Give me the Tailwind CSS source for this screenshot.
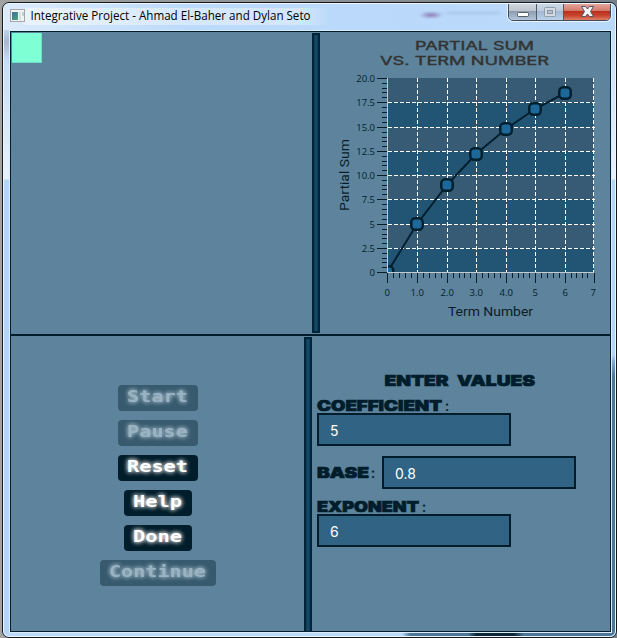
<!DOCTYPE html>
<html lang="en">
<head>
<meta charset="utf-8">
<title>Integrative Project</title>
<script src="https://cdn.jsdelivr.net/npm/@tailwindcss/browser@4"></script>
</head>
<body class="w-[617px] h-[638px] overflow-hidden bg-gradient-to-r from-[#a2a2a0] to-[#77818a] pt-[2px] pl-[2px] font-['Open_Sans',sans-serif]">
<!-- window frame -->
<div class="w-[615px] h-[636px] rounded-[7px] border border-[#15191d] bg-[#b9dafb] overflow-hidden">
<div class="w-[613px] h-[634px] rounded-[6px] border border-[#eef7ff] overflow-hidden flex flex-col">
  <header class="h-[26px] shrink-0 flex items-start justify-between bg-gradient-to-r from-[#dcebfb] via-[#bcdafa] via-30% to-[#b9d9fb]">
    <div class="flex items-start pl-[6px] pt-[3px]">
      <svg class="w-[300px] h-[20px] overflow-visible" viewBox="10 7 300 20">
        <defs>
          <linearGradient id="ico" x1="0" y1="0" x2="1" y2="1"><stop offset="0" stop-color="#3c6c9e"/><stop offset="1" stop-color="#4ca77a"/></linearGradient>
          <linearGradient id="glow" x1="0" y1="0" x2="1" y2="0"><stop offset="0" stop-color="#fff" stop-opacity=".45"/><stop offset=".9" stop-color="#fff" stop-opacity=".35"/><stop offset="1" stop-color="#fff" stop-opacity="0"/></linearGradient>
          <filter id="soft" x="-50%" y="-150%" width="200%" height="400%"><feGaussianBlur stdDeviation="3 1.5"/></filter>
        </defs>
        <rect x="20" y="8" width="310" height="17" rx="8" fill="url(#glow)"/>
        <rect x="424" y="13" width="14" height="4" fill="#7a5a9a" opacity=".7" filter="url(#soft)"/>
        <rect x="445" y="12" width="55" height="2" fill="#7d9cc4" opacity=".4" filter="url(#soft)"/>
        <rect x="10.500" y="9.500" width="14" height="12" fill="#f1f2f2" stroke="#a4a7aa"/>
        <rect x="12" y="12" width="6" height="8" fill="url(#ico)"/>
        <rect x="19" y="12" width="2" height="8" fill="#dcdedf"/>
        <rect x="22" y="12" width="2" height="4" fill="#b9d6cb"/>
        <text x="30.500" y="20" font-size="12" fill="#000" textLength="280" lengthAdjust="spacingAndGlyphs">Integrative Project - Ahmad El-Baher and Dylan Seto</text>
      </svg>
    </div>
    <!-- caption buttons -->
    <div class="flex mr-[4px] -mt-[2px] h-[19px] w-[103px] rounded-b-[5px] border border-[#3f4b59] overflow-hidden shadow-[0_0_0_1px_#e8f3ff]">
      <div class="w-[28px] border-r border-[#4f5b69] bg-[linear-gradient(#d3d8df_0%,#bcc5d0_45%,#8d9bac_48%,#b3c6dc_100%)] flex justify-center">
        <svg width="27" height="17" viewBox="0 0 27 17"><rect x="8.500" y="9.500" width="11" height="4" rx="1" fill="#fff" stroke="#555d68"/></svg>
      </div>
      <div class="w-[27px] border-r border-[#4f5b69] bg-[linear-gradient(#ced9e6_0%,#bccbdd_45%,#a2b6cf_48%,#bad2ec_100%)] flex justify-center">
        <svg width="26" height="17" viewBox="0 0 26 17"><rect x="7.500" y="4.500" width="11" height="9" rx="1" fill="#d4dbe3" stroke="#909dab"/><rect x="10.500" y="7.500" width="5" height="3" fill="#b5c2d1" stroke="#8795a5"/></svg>
      </div>
      <div class="flex-1 bg-[linear-gradient(#e5aba0_0%,#d27b6c_45%,#b92e1b_48%,#c8452e_75%,#df8068_100%)] flex justify-center">
        <svg width="46" height="17" viewBox="0 0 46 17"><path d="M17.500 3.500h4l2 2.500 2-2.500h4l-3 5 3 5h-4l-2-2.500-2 2.500h-4l3-5z" fill="#f5f5f5" stroke="#535666"/></svg>
      </div>
    </div>
  </header>

  <div class="flex h-[603px] shrink-0">
    <div class="w-[5px] shrink-0 bg-[linear-gradient(#bfd4eb_0px,#a7b9d0_12px,#c4ddf7_30px,#e8f2fd_149px,#b3d5f9_150px)]"></div>
    <main class="w-[603px] shrink-0 border border-[#dcecf8] bg-[#5d849c]">
      <section class="h-[305px] w-full border-t border-x border-b-2 border-[#001d2b] flex">
        <div class="w-[301px] pt-px pl-px shrink-0">
          <div class="size-[30px] bg-[#7fffd4] border-r border-b border-[#71dfc6]"></div>
        </div>
        <div class="w-[8px] mt-px mb-px shrink-0 border-2 border-[#002538] bg-[linear-gradient(90deg,#0c3a58,#164c70_50%,#0c3a58)]"></div>
        <svg class="w-[290px] h-[302px] shrink-0" viewBox="320 32 290 302" id="chart">
          <g font-family="Inter, sans-serif" font-size="12.300" fill="#333" stroke="#333" stroke-width=".4">
            <text x="415" y="49.500" textLength="119" lengthAdjust="spacingAndGlyphs">PARTIAL SUM</text>
            <text x="380" y="65" textLength="169" lengthAdjust="spacingAndGlyphs">VS. TERM NUMBER</text>
          </g>
          <g id="bands"></g>
          <g id="grid" stroke="#fff" stroke-width="1" stroke-dasharray="4 2" shape-rendering="crispEdges"></g>
          <path d="M387.500 78V272.500H594" fill="none" stroke="#c3cbd0"/>
          <g id="ticks" stroke="#001d2b" shape-rendering="crispEdges"></g>
          <g id="labels" font-family="Open Sans, sans-serif" font-size="9.500" fill="#031f2e"></g>
          <text x="448" y="316" font-family="Roboto, sans-serif" font-size="13" fill="#0b1c28" textLength="85" lengthAdjust="spacingAndGlyphs">Term Number</text>
          <text transform="translate(349 211) rotate(-90)" font-family="Roboto, sans-serif" font-size="13" fill="#0b1c28" textLength="72" lengthAdjust="spacingAndGlyphs">Partial Sum</text>
          <clipPath id="plot"><rect x="388" y="70" width="214" height="202"/></clipPath>
          <g clip-path="url(#plot)">
            <path d="M387.500 272 417 224 447 185 476 154 506 129 535 109 565 93" fill="none" stroke="#00202f" stroke-width="2"/>
            <g id="points" fill="#1d6799" stroke="#00202f" stroke-width="2.500"></g>
          </g>
        </svg>
      </section>

      <section class="h-[296px] w-full border-x border-b border-[#001d2b] flex">
        <div class="w-[293px] shrink-0 pt-[49px] flex flex-col items-center gap-[9px]" id="buttons">
          <div class="w-[80px] h-[26px] rounded-[4px] bg-[#001d2b] opacity-40"><svg class="w-full h-full overflow-visible" viewBox="0 0 80 26"><text x="9" y="17" textLength="61" lengthAdjust="spacingAndGlyphs" class="font-['DejaVu_Sans_Mono',monospace] font-bold text-[15px] fill-[#f4fbff] [text-shadow:0_0_5px_#fff,0_0_4px_#fff]">Start</text></svg></div>
          <div class="w-[80px] h-[26px] rounded-[4px] bg-[#001d2b] opacity-40"><svg class="w-full h-full overflow-visible" viewBox="0 0 80 26"><text x="9" y="17" textLength="61" lengthAdjust="spacingAndGlyphs" class="font-['DejaVu_Sans_Mono',monospace] font-bold text-[15px] fill-[#f4fbff] [text-shadow:0_0_5px_#fff,0_0_4px_#fff]">Pause</text></svg></div>
          <div class="w-[80px] h-[26px] rounded-[4px] bg-[#001d2b]"><svg class="w-full h-full overflow-visible" viewBox="0 0 80 26"><text x="9" y="17" textLength="61" lengthAdjust="spacingAndGlyphs" class="font-['DejaVu_Sans_Mono',monospace] font-bold text-[15px] fill-white [text-shadow:0_0_5px_#e5e5e5,0_0_4px_#e5e5e5]">Reset</text></svg></div>
          <div class="w-[68px] h-[26px] rounded-[4px] bg-[#001d2b]"><svg class="w-full h-full overflow-visible" viewBox="0 0 68 26"><text x="9" y="17" textLength="49" lengthAdjust="spacingAndGlyphs" class="font-['DejaVu_Sans_Mono',monospace] font-bold text-[15px] fill-white [text-shadow:0_0_5px_#e5e5e5,0_0_4px_#e5e5e5]">Help</text></svg></div>
          <div class="w-[68px] h-[26px] rounded-[4px] bg-[#001d2b]"><svg class="w-full h-full overflow-visible" viewBox="0 0 68 26"><text x="9" y="17" textLength="49" lengthAdjust="spacingAndGlyphs" class="font-['DejaVu_Sans_Mono',monospace] font-bold text-[15px] fill-white [text-shadow:0_0_5px_#e5e5e5,0_0_4px_#e5e5e5]">Done</text></svg></div>
          <div class="w-[116px] h-[26px] rounded-[4px] bg-[#001d2b] opacity-40"><svg class="w-full h-full overflow-visible" viewBox="0 0 116 26"><text x="9" y="17" textLength="97" lengthAdjust="spacingAndGlyphs" class="font-['DejaVu_Sans_Mono',monospace] font-bold text-[15px] fill-[#f4fbff] [text-shadow:0_0_5px_#fff,0_0_4px_#fff]">Continue</text></svg></div>
        </div>
        <div class="w-[8px] mt-px shrink-0 border-2 border-b-0 border-[#002538] bg-[linear-gradient(90deg,#0c3a58,#164c70_50%,#0c3a58)]"></div>
        <div class="flex-1 pl-[5px] pt-[36px] flex flex-col items-start font-['Inter',sans-serif] text-[14px]">
          <svg class="w-[290px] h-[41px] overflow-visible" viewBox="317 372 290 41">
            <g font-weight="900" font-size="14.500" fill="#001d2b" stroke="#001d2b" stroke-width=".7">
              <text x="384.500" y="386" textLength="64" lengthAdjust="spacingAndGlyphs">ENTER</text>
              <text x="457" y="386" textLength="78" lengthAdjust="spacingAndGlyphs">VALUES</text>
              <text x="317" y="411" textLength="125" lengthAdjust="spacingAndGlyphs">COEFFICIENT</text>
            </g>
            <text x="445" y="411" font-size="14" fill="#001d2b" stroke="#001d2b" stroke-width=".4">:</text>
          </svg>
          <div class="w-[194px] h-[33px] border-2 border-[#001d2b] bg-[#316484] text-white flex items-center pl-[11px] pt-px">5</div>
          <div class="mt-[10px] flex">
            <svg class="w-[65px] h-[33px]" viewBox="317 456 65 33">
              <text x="317" y="478" font-weight="900" font-size="14.500" fill="#001d2b" stroke="#001d2b" stroke-width=".7" textLength="52" lengthAdjust="spacingAndGlyphs">BASE</text>
              <text x="371" y="478" font-size="14" fill="#001d2b" stroke="#001d2b" stroke-width=".4">:</text>
            </svg>
            <div class="w-[194px] h-[33px] border-2 border-[#001d2b] bg-[#316484] text-white flex items-center pl-[11px] pt-px">0.8</div>
          </div>
          <svg class="w-[200px] h-[25px]" viewBox="317 489 200 25">
            <text x="317" y="512" font-weight="900" font-size="14.500" fill="#001d2b" stroke="#001d2b" stroke-width=".7" textLength="102" lengthAdjust="spacingAndGlyphs">EXPONENT</text>
            <text x="422" y="512" font-size="14" fill="#001d2b" stroke="#001d2b" stroke-width=".4">:</text>
          </svg>
          <div class="w-[194px] h-[33px] border-2 border-[#001d2b] bg-[#316484] text-white flex items-center pl-[11px] pt-px">6</div>
        </div>
      </section>
    </main>
    <div class="flex-1 bg-[linear-gradient(#c4ddf7_0px,#e8f2fd_149px,#b3d5f9_150px,#b3d5f9_325px,#7ba6d8_332px,#4d7799_346px,#4d7799_100%)]"></div>
  </div>
  <div class="flex-1 bg-[linear-gradient(90deg,#b9dafb_0px,#b9dafb_398px,#4d7799_406px,#4d7799_464px,#0c2836_472px,#0c2836_510px,#4d7799_520px)]"></div>
</div>
</div>
<script>
const NS = 'http://www.w3.org/2000/svg';
function add(id, tag, attrs, text) {
  const e = document.createElementNS(NS, tag);
  for (const k in attrs) e.setAttribute(k, attrs[k]);
  if (text !== undefined) e.textContent = text;
  document.getElementById(id).appendChild(e);
}
const ys = [78, 102, 127, 151, 175, 199, 224, 248, 272];
const xs = [387, 417, 447, 476, 506, 535, 565, 593];
const yl = ['20.0', '17.5', '15.0', '12.5', '10.0', '7.5', '5', '2.5', '0'];
const xl = ['0', '1.0', '2.0', '3.0', '4.0', '5', '6', '7'];
ys.forEach((y, i) => {
  if (i < 8) add('bands', 'rect', { x: 388, y, width: 206, height: ys[i + 1] - y, fill: i % 2 ? '#225474' : '#375b75' });
  if (i > 0 && i < 8) add('grid', 'line', { x1: 388, x2: 595, y1: y + .5, y2: y + .5 });
  add('ticks', 'line', { x1: 377, x2: 387, y1: y + .5, y2: y + .5 });
  if (i < 8) for (let k = 1; k < 5; k++) {
    const v = Math.round(y + (ys[i + 1] - y) * k / 5) + .5;
    add('ticks', 'line', { x1: 382, x2: 387, y1: v, y2: v });
  }
  add('labels', 'text', { x: 375, y: y + 4, 'text-anchor': 'end' }, yl[i]);
});
xs.forEach((x, i) => {
  if (i > 0) add('grid', 'line', { x1: x + .5, x2: x + .5, y1: 78, y2: 272 });
  const t = i === 7 ? 594 : x;
  add('ticks', 'line', { x1: t + .5, x2: t + .5, y1: 273, y2: 283 });
  if (i < 7) for (let k = 1; k < 5; k++) {
    const v = Math.round(x + (xs[i + 1] - x) * k / 5) + .5;
    add('ticks', 'line', { x1: v, x2: v, y1: 273, y2: 278 });
  }
  add('labels', 'text', { x: x + .3, y: 296, 'text-anchor': 'middle' }, xl[i]);
});
[[387.5, 272], [417, 224], [447, 185], [476, 154], [506, 129], [535, 109], [565, 93]].forEach(([x, y]) =>
  add('points', 'rect', { x: x - 5.75, y: y - 5.75, width: 11.5, height: 11.5, rx: 4 }));
</script>
</body>
</html>
